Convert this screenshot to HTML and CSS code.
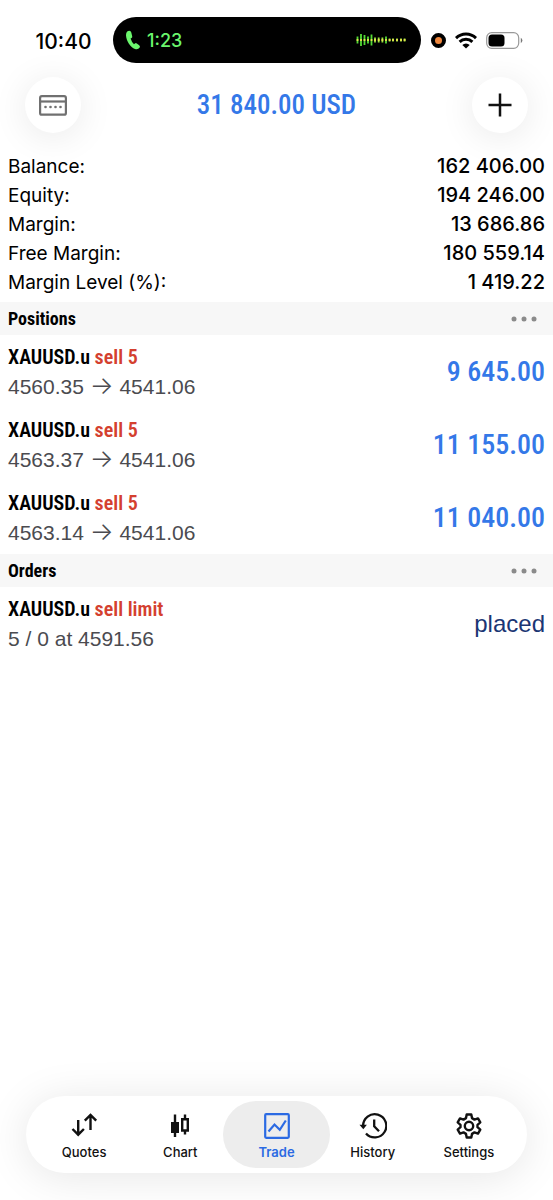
FILE: index.html
```html
<!DOCTYPE html>
<html lang="en">
<head>
<meta charset="utf-8">
<meta name="viewport" content="width=device-width, initial-scale=1">
<title>Trade</title>
<link rel="stylesheet" href="styles.css">
</head>
<body>
<div class="screen">
  <div class="status">
    <time class="clock">10:40</time>
    <div class="island">
      <svg class="phone" width="16" height="20" viewBox="0 0 16 20" aria-hidden="true"><path d="M3.2 1 Q1 1.800 1 5.500 C1.300 11 5.500 17.500 10 19 Q13 20 14.700 17.600 Q15.500 16.300 14.200 15.200 L11.800 13.400 Q10.800 12.800 9.900 13.500 L9 14.200 Q6.800 12.600 5.600 8.600 L6.600 7.900 Q7.500 7.300 7.200 6.200 L6.300 2.500 Q5.700.200 3.200 1Z" fill="#6bf66d"/></svg>
      <span class="call-time">1:23</span>
      <svg class="wave" width="50" height="14" viewBox="0 0 50 14" aria-hidden="true">
        <g fill="none" stroke-width="1.800">
          <path stroke="#54d935" d="M1.500 3.500v7M5 1v12M8.500 2v10M12 3.500v7M15.500 1.500v11M30 3.500v7"/>
          <path stroke="#9be83c" d="M19 4.500v5M22.700 4.500v5M26.400 4.500v5M33.600 5.500v3M37 5.500v3M41 5.500v3M45 5.500v3M48.600 5.500v3"/>
          <path stroke="#e4e44c" d="M1.500 6v2M5 6v2M8.500 6v2M12 6v2M15.500 6v2M19 6v2M22.700 6v2M26.400 6v2M30 6v2M33.600 6v2M37 6v2M41 6v2M45 6v2M48.600 6v2"/>
        </g>
      </svg>
    </div>
    <div class="indicators">
      <span class="recording"></span>
      <svg width="22" height="17" viewBox="0 0 22 17" aria-hidden="true"><g fill="none" stroke="#000" stroke-width="2.900"><path d="M1 6.100a14.200 14.200 0 0 1 20 0"/><path d="M4.600 9.900a9.100 9.100 0 0 1 12.800 0"/></g><path d="M7.300 12.900a5.300 5.300 0 0 1 7.400 0L11 16.600Z"/></svg>
      <svg width="37" height="17" viewBox="0 0 37 17" aria-hidden="true"><rect x=".7" y=".7" width="32" height="15.600" rx="5" fill="none" stroke="#999" stroke-width="1.200"/><rect x="2.500" y="2.500" width="16" height="12" rx="3.500"/><path d="M34.800 5.800q3.200 2.700 0 5.400z" fill="#777"/></svg>
    </div>
  </div>

  <header class="header">
    <button class="round" type="button" aria-label="Accounts">
      <svg width="28" height="21" viewBox="0 0 28 21" aria-hidden="true"><g fill="none" stroke="#707070" stroke-width="2.200"><rect x="1.100" y="1.100" width="25.800" height="18.600" rx="1.800"/><path d="M1 6.500h26"/></g><g fill="#707070"><circle cx="6.500" cy="12" r="1.300"/><circle cx="11.500" cy="12" r="1.300"/><circle cx="16.500" cy="12" r="1.300"/><circle cx="21.500" cy="12" r="1.300"/></g></svg>
    </button>
    <h1 class="profit">31 840.00 USD</h1>
    <button class="round" type="button" aria-label="New order">
      <svg width="24" height="24" viewBox="0 0 24 24" aria-hidden="true"><path d="M12 .5v23M.5 12h23" fill="none" stroke="#111" stroke-width="2.500"/></svg>
    </button>
  </header>

  <main>
    <dl class="summary">
      <div class="pair"><dt>Balance:</dt><dd>162 406.00</dd></div>
      <div class="pair"><dt>Equity:</dt><dd>194 246.00</dd></div>
      <div class="pair"><dt>Margin:</dt><dd>13 686.86</dd></div>
      <div class="pair"><dt>Free Margin:</dt><dd>180 559.14</dd></div>
      <div class="pair"><dt>Margin Level (%):</dt><dd>1 419.22</dd></div>
    </dl>

    <section>
      <div class="section-head">
        <h2>Positions</h2>
        <button class="more" type="button" aria-label="Positions menu"><svg width="26" height="6" viewBox="0 0 26 6" aria-hidden="true"><g fill="#8b8b8b"><circle cx="3" cy="3" r="2.500"/><circle cx="13" cy="3" r="2.500"/><circle cx="23" cy="3" r="2.500"/></g></svg></button>
      </div>
      <ul class="list">
        <li class="deal"><div><h3>XAUUSD.u <span class="side">sell 5</span></h3><p>4560.35 <span class="arrow">→</span> 4541.06</p></div><span class="amount">9 645.00</span></li>
        <li class="deal"><div><h3>XAUUSD.u <span class="side">sell 5</span></h3><p>4563.37 <span class="arrow">→</span> 4541.06</p></div><span class="amount">11 155.00</span></li>
        <li class="deal"><div><h3>XAUUSD.u <span class="side">sell 5</span></h3><p>4563.14 <span class="arrow">→</span> 4541.06</p></div><span class="amount">11 040.00</span></li>
      </ul>
    </section>

    <section>
      <div class="section-head">
        <h2>Orders</h2>
        <button class="more" type="button" aria-label="Orders menu"><svg width="26" height="6" viewBox="0 0 26 6" aria-hidden="true"><g fill="#8b8b8b"><circle cx="3" cy="3" r="2.500"/><circle cx="13" cy="3" r="2.500"/><circle cx="23" cy="3" r="2.500"/></g></svg></button>
      </div>
      <ul class="list">
        <li class="deal"><div><h3>XAUUSD.u <span class="side">sell limit</span></h3><p>5 / 0 at 4591.56</p></div><span class="state">placed</span></li>
      </ul>
    </section>
  </main>

  <nav class="tabs" aria-label="Main">
    <a class="tab" href="#quotes">
      <svg width="28" height="28" viewBox="0 0 28 28" aria-hidden="true"><path d="M8.200 8v14.500M2.500 17l5.700 5.700L13.900 17M20.500 18V3M14.800 8.700L20.500 3l5.700 5.700" fill="none" stroke="#111" stroke-width="2.400"/></svg>
      Quotes
    </a>
    <a class="tab" href="#chart">
      <svg width="28" height="28" viewBox="0 0 28 28" aria-hidden="true"><path d="M5 10h8v11H5zM7.800 2.500h2.400v22.500H7.800z" fill="#111"/><path d="M16.200 7.200h5.600v11.300h-5.600zM19 2.500v4M19 19v3.500" fill="none" stroke="#111" stroke-width="2.400"/></svg>
      Chart
    </a>
    <a class="tab current" href="#trade" aria-current="page">
      <svg width="28" height="28" viewBox="0 0 28 28" aria-hidden="true"><g fill="none" stroke="#2b6ae3" stroke-width="2.200"><rect x="2.200" y="2.200" width="23.600" height="23.600" rx="1"/><path d="M5.500 19.500L11.500 12.500l5.300 5.300L22.800 8.500"/></g></svg>
      Trade
    </a>
    <a class="tab" href="#history">
      <svg width="28" height="28" viewBox="0 0 28 28" aria-hidden="true"><g fill="none" stroke="#111" stroke-width="2.300"><path d="M4.100 14A11.600 11.600 0 1 1 7 21.500"/><path d="M15.200 7.500v6.800l4.800 5"/></g><path d="M.500 12.800h7.400L4.300 17.300z" fill="#111"/></svg>
      History
    </a>
    <a class="tab" href="#settings">
      <svg width="28" height="28" viewBox="0 0 28 28" aria-hidden="true"><g fill="none" stroke="#111" stroke-width="2.400" stroke-linejoin="round"><path d="M11.700 2.500h4.600l.7 3.600 2.500 1.500 3.500-1.200 2.300 4-2.800 2.400v2.400l2.800 2.400-2.300 4-3.500-1.200-2.500 1.500-.7 3.600h-4.600l-.7-3.600-2.500-1.500-3.500 1.200-2.300-4 2.800-2.400v-2.400l-2.800-2.400 2.300-4 3.500 1.200 2.500-1.500z"/><circle cx="14" cy="14" r="4.200"/></g></svg>
      Settings
    </a>
  </nav>
</div>
</body>
</html>
```

FILE: styles.css
```css
* { box-sizing: border-box; margin: 0; padding: 0; }

body {
  background: #fff;
  color: #000;
  font-family: Inter, "Liberation Sans", sans-serif;
}

.screen {
  display: flex;
  flex-direction: column;
  min-height: 100vh;
  padding-bottom: 27px;
  overflow: hidden;
}

main { flex: 1; }

svg { display: block; flex: none; }

button { border: 0; background: none; color: inherit; cursor: pointer; }

/* Status bar */
.status {
  display: grid;
  grid-template-columns: 113px 1fr 132px;
  align-items: center;
  padding-top: 17px;
}

.clock {
  padding: 2px 0 0 14px;
  text-align: center;
  font-size: 21px;
  font-weight: 500;
}

.island {
  display: flex;
  align-items: center;
  height: 46px;
  padding: 0 15px 0 12px;
  border-radius: 23px;
  background: #000;
}

.call-time {
  margin-left: 6px;
  color: #6bf66d;
  font-size: 18px;
  font-weight: 500;
}

.wave { margin-left: auto; }

.indicators {
  display: flex;
  align-items: center;
  gap: 9px;
  padding-left: 10px;
}

.recording {
  width: 15px;
  height: 15px;
  border: 4px solid #000;
  border-radius: 50%;
  background: #f0883e;
}

/* Header */
.header {
  display: flex;
  align-items: center;
  justify-content: space-between;
  padding: 14px 25px 19px;
}

.round {
  display: grid;
  place-items: center;
  width: 56px;
  height: 56px;
  border-radius: 50%;
  background: #fff;
  box-shadow: 0 4px 36px rgba(0, 0, 0, 0.09);
}

.profit,
.amount {
  color: #3478e8;
  font-family: "Liberation Sans Narrow", "Roboto Condensed", "Open Sans Condensed", Roboto, sans-serif;
  font-size: 28px;
  font-weight: 500;
  line-height: 34px;
  white-space: nowrap;
}

.profit { font-size: 27px; }

/* Account summary */
.summary {
  padding: 0 8px 5px;
  font-size: 19px;
  line-height: 29px;
}

.pair { display: flex; justify-content: space-between; }

.pair dd { font-size: 20px; font-weight: 500; }

/* Sections */
.section-head {
  display: flex;
  align-items: center;
  justify-content: space-between;
  height: 33px;
  padding: 0 16px 0 8px;
  background: #f7f7f7;
}

.section-head h2,
.deal h3 {
  font-family: "Liberation Sans Narrow", "Roboto Condensed", "Open Sans Condensed", Roboto, sans-serif;
  font-weight: 700;
}

.section-head h2 { font-size: 18px; line-height: 24px; }

.list { list-style: none; }

.deal {
  display: flex;
  align-items: center;
  justify-content: space-between;
  height: 73px;
  padding: 0 8px;
}

.deal h3 { font-size: 20px; font-weight: 600; line-height: 30px; }

.deal p {
  color: #4b4b50;
  font-family: "Liberation Sans", sans-serif;
  font-size: 21px;
  line-height: 30px;
}

.arrow {
  font-family: Inter, sans-serif;
  font-size: 25px;
  font-weight: 300;
  line-height: 1;
}

.side { color: #d4402f; }

.state {
  color: #1b3674;
  font-family: "Liberation Sans", sans-serif;
  font-size: 24px;
  line-height: 32px;
}

/* Tab bar */
.tabs {
  display: flex;
  margin: 0 26px;
  padding: 0 10px;
  border-radius: 39px;
  background: #fff;
  box-shadow: 0 4px 44px rgba(0, 0, 0, 0.1);
}

.tab {
  position: relative;
  z-index: 0;
  display: flex;
  flex: 1;
  flex-direction: column;
  align-items: center;
  gap: 4px;
  padding: 16px 0 12px;
  color: #111;
  font-size: 13px;
  font-weight: 500;
  line-height: 17px;
  text-decoration: none;
}

.current { color: #2b6ae3; font-weight: 600; }

.current::before {
  content: "";
  position: absolute;
  z-index: -1;
  inset: 5px -5px;
  border-radius: 34px;
  background: #ededed;
}
```
